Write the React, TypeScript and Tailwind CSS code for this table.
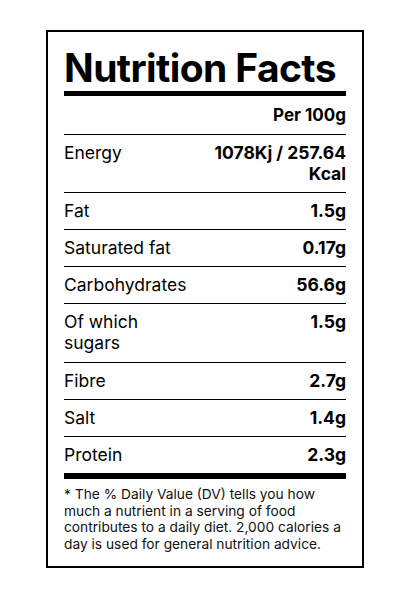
import React from "react";

const rows: { label: React.ReactNode; value: React.ReactNode }[] = [
  { label: "Energy", value: (<>1078Kj / 257.64<br />Kcal</>) },
  { label: "Fat", value: "1.5g" },
  { label: "Saturated fat", value: "0.17g" },
  { label: "Carbohydrates", value: "56.6g" },
  { label: (<>Of which<br />sugars</>), value: "1.5g" },
  { label: "Fibre", value: "2.7g" },
  { label: "Salt", value: "1.4g" },
  { label: "Protein", value: "2.3g" },
];

export default function App() {
  return (
    <div className="min-h-[600px] bg-white pt-[30px] pl-[46px]" style={{ fontFamily: "Inter, 'Noto Sans', sans-serif" }}>
      <div className="w-[318px] border-2 border-black px-4 pt-4 pb-[14px] text-black">
        <h1 className="whitespace-nowrap text-[39px] font-bold leading-[40px] tracking-[-0.6px]">Nutrition Facts</h1>
        <div className="mt-[3px] h-[5px] bg-black" />
        <div className="mt-[2px] flex justify-end border-b border-black pt-[7px] pb-[8px] text-[17px] font-bold leading-[21px]">
          Per 100g
        </div>
        {rows.map((r, i) => (
          <div
            key={i}
            className={`flex items-start justify-between pt-[7px] text-[17.5px] leading-[21px] ${i === 4 ? "pb-[9px]" : "pb-[8px]"} ${i < rows.length - 1 ? "border-b border-black" : ""}`}
          >
            <div>{r.label}</div>
            <div className="text-right font-bold">{r.value}</div>
          </div>
        ))}
        <div className="h-[6px] bg-black" />
        <p className="mt-[7px] whitespace-nowrap text-[13.75px] leading-[16.5px] text-[#111]">
          * The % Daily Value (DV) tells you how
          <br />
          much a nutrient in a serving of food
          <br />
          contributes to a daily diet. 2,000 calories a
          <br />
          day is used for general nutrition advice.
        </p>
      </div>
    </div>
  );
}
